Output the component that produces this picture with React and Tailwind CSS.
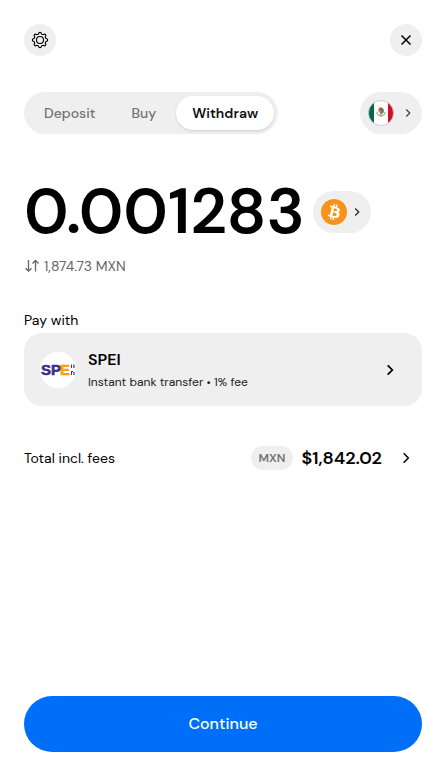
import React, { useState } from 'react';

const Chevron = ({ className, strokeWidth = 2 }) => (
  <svg
    className={className}
    viewBox="0 0 12 12"
    fill="none"
    stroke="currentColor"
    strokeWidth={strokeWidth}
    aria-hidden="true"
  >
    <path d="M4.25 2.5 7.75 6l-3.5 3.5" />
  </svg>
);

const GearIcon = () => (
  <svg
    className="w-5 h-5"
    viewBox="0 0 20 20"
    fill="none"
    stroke="currentColor"
    strokeWidth="1.1"
    strokeLinejoin="round"
    aria-hidden="true"
  >
    <path d="M8.97 2.67Q10 2 11.03 2.67L11.58 4.11Q12.3 4.7 13.05 4.72L14.45 4.09Q15.7 4.3 15.91 5.55L15.28 6.95Q15.3 7.7 15.89 8.42L17.33 8.97Q18 10 17.33 11.03L15.89 11.58Q15.3 12.3 15.28 13.05L15.91 14.45Q15.7 15.7 14.45 15.91L13.05 15.28Q12.3 15.3 11.58 15.89L11.03 17.33Q10 18 8.97 17.33L8.42 15.89Q7.7 15.3 6.95 15.28L5.55 15.91Q4.3 15.7 4.09 14.45L4.72 13.05Q4.7 12.3 4.11 11.58L2.67 11.03Q2 10 2.67 8.97L4.11 8.42Q4.7 7.7 4.72 6.95L4.09 5.55Q4.3 4.3 5.55 4.09L6.95 4.72Q7.7 4.7 8.42 4.11Z" />
    <circle cx="10" cy="10" r="3.5" />
  </svg>
);

const CloseIcon = () => (
  <svg className="w-5 h-5" viewBox="0 0 20 20" fill="none" stroke="currentColor" strokeWidth="1.5" aria-hidden="true">
    <path d="M5.5 5.5l9 9M14.5 5.5l-9 9" />
  </svg>
);

const SwapIcon = () => (
  <svg className="w-4 h-4" viewBox="0 0 16 16" fill="none" stroke="currentColor" strokeWidth="1.3" aria-hidden="true">
    <path d="M4.5 2v11M1.5 10.2l3 3 3-3M11.5 13.5v-11M8.5 5.5l3-3 3 3" />
  </svg>
);

const MexicoFlag = () => (
  <svg className="w-[26px] h-[26px]" viewBox="0 0 26 26" role="img" aria-label="Mexico">
    <clipPath id="flag-circle">
      <circle cx="13" cy="13" r="12.5" />
    </clipPath>
    <g clipPath="url(#flag-circle)">
      <path fill="#fff" d="M0 0h26v26H0z" />
      <path fill="#006847" d="M0 0h6v26H0z" />
      <path fill="#ce1126" d="M20 0h6v26h-6z" />
    </g>
    <path d="M9 12a4 4 0 0 0 8 0" fill="none" stroke="#a9b087" strokeWidth="1.3" />
    <path d="M10.5 8.5l2-1.3 2 .8 1.5 2-.3 2.5-2 1.5-2-.5.8-2.3-1.5.4z" fill="#857055" />
    <path d="M9.5 10.5l1.8 1.5 2 .4" fill="none" stroke="#b98b45" strokeWidth=".9" />
    <path d="M11.5 15h3" stroke="#4da6a0" strokeWidth="1" />
    <circle cx="13" cy="13" r="12.5" fill="none" stroke="#c4c4c4" strokeWidth=".8" />
  </svg>
);

const BitcoinIcon = () => (
  <svg className="w-[26px] h-[26px]" viewBox="0 0 32 32" role="img" aria-label="Bitcoin">
    <circle cx="16" cy="16" r="16" fill="#f7931a" />
    <path
      fill="#fff"
      d="M23.189 14.02c.314-2.096-1.283-3.223-3.465-3.975l.708-2.84-1.728-.43-.69 2.765c-.454-.114-.92-.22-1.385-.326l.695-2.783L15.596 6l-.708 2.839c-.376-.086-.746-.17-1.104-.26l.002-.009-2.384-.595-.46 1.846s1.283.294 1.256.312c.7.175.826.638.805 1.006l-.806 3.235c.048.012.11.03.18.057l-.183-.045-1.13 4.532c-.086.212-.303.531-.793.41.018.025-1.256-.313-1.256-.313l-.858 1.978 2.25.561c.418.105.828.215 1.231.318l-.715 2.872 1.727.43.708-2.84c.472.127.93.245 1.378.357l-.706 2.828 1.728.43.715-2.866c2.948.558 5.164.333 6.097-2.333.752-2.146-.037-3.385-1.588-4.192 1.13-.26 1.98-1.003 2.207-2.538zm-3.95 5.538c-.533 2.147-4.148.986-5.32.695l.95-3.805c1.172.293 4.929.872 4.37 3.11zm.535-5.569c-.487 1.953-3.495.96-4.47.717l.86-3.45c.975.243 4.118.696 3.61 2.733z"
    />
  </svg>
);

const SpeiLogo = () => (
  <svg className="w-9 h-9 shrink-0" viewBox="0 0 36 36" aria-hidden="true">
    <circle cx="18" cy="18" r="18" fill="#fff" />
    <g fontFamily="Liberation Sans, Arial, sans-serif" fontWeight="700" fontSize="15" strokeWidth=".6">
      <text x="1" y="23" fill="#38308f" stroke="#38308f">SP</text>
      <text x="20" y="23" fill="#ff9d0a" stroke="#ff9d0a">E</text>
    </g>
    <path d="M31 12.5h1V16h-1zM33.3 12.5h1.2V16h-1.2zM31 19h1v4h-1zM32 19h1v1h-1zM33.3 20h1.2v3h-1.2z" fill="#38308f" />
  </svg>
);

const tabs = ['Deposit', 'Buy', 'Withdraw'];

export default function App() {
  const [active, setActive] = useState('Withdraw');

  return (
    <main className="min-h-screen flex flex-col p-6 bg-white text-black font-['DM_Sans',Inter,sans-serif]">
      <header className="flex justify-between">
        <button aria-label="Settings" className="w-8 h-8 flex items-center justify-center rounded-full bg-[#efefef]">
          <GearIcon />
        </button>
        <button aria-label="Close" className="w-8 h-8 flex items-center justify-center rounded-full bg-[#efefef]">
          <CloseIcon />
        </button>
      </header>

      <div className="flex justify-between mt-9">
        <nav className="flex gap-1 p-1 rounded-full bg-[#efefef] text-sm">
          {tabs.map((tab) => (
            <button
              key={tab}
              onClick={() => setActive(tab)}
              className={
                tab === active
                  ? 'px-4 rounded-full bg-white font-semibold text-[#111] shadow-sm'
                  : 'px-4 rounded-full font-medium text-[#737373]'
              }
            >
              {tab}
            </button>
          ))}
        </nav>
        <button aria-label="Mexico" className="flex items-center gap-2 h-[42px] px-2 rounded-full bg-[#efefef]">
          <MexicoFlag />
          <Chevron className="w-3 h-3 text-[#444]" strokeWidth={1.3} />
        </button>
      </div>

      <section className="mt-[45px]">
        <div className="flex items-center gap-2">
          <h1 className="text-[64px] leading-[66px] font-semibold">0.001283</h1>
          <button aria-label="Bitcoin" className="flex items-center gap-1 h-[42px] px-2 rounded-full bg-[#efefef]">
            <BitcoinIcon />
            <Chevron className="w-3 h-3 text-[#222]" strokeWidth={1.2} />
          </button>
        </div>
        <button className="flex items-center gap-1 mt-[11px] text-sm text-[#666]">
          <SwapIcon />
          1,874.73 MXN
        </button>
      </section>

      <section className="mt-9">
        <h2 className="text-sm leading-4">Pay with</h2>
        <button className="w-full flex items-center gap-3 mt-[5px] h-[73px] pl-4 pr-6 rounded-[18px] bg-[#efefef] text-left">
          <SpeiLogo />
          <span className="flex-1">
            <span className="block text-base leading-5 font-semibold">SPEI</span>
            <span className="block mt-1 text-xs leading-4 text-[#222]">Instant bank transfer • 1% fee</span>
          </span>
          <Chevron className="w-4 h-4" strokeWidth={1.3} />
        </button>
      </section>

      <section className="flex items-center mt-[38px] pr-2">
        <span className="flex-1 text-sm">Total incl. fees</span>
        <span className="px-2 py-1 rounded-full bg-[#efefef] text-xs font-semibold text-[#737373]">MXN</span>
        <span className="ml-2 text-lg font-semibold">$1,842.02</span>
        <button aria-label="Fee details" className="ml-4">
          <Chevron className="w-4 h-4" strokeWidth={1.1} />
        </button>
      </section>

      <button className="w-full h-14 mt-auto rounded-full bg-[#006ff7] text-base font-medium text-white">
        Continue
      </button>
    </main>
  );
}
